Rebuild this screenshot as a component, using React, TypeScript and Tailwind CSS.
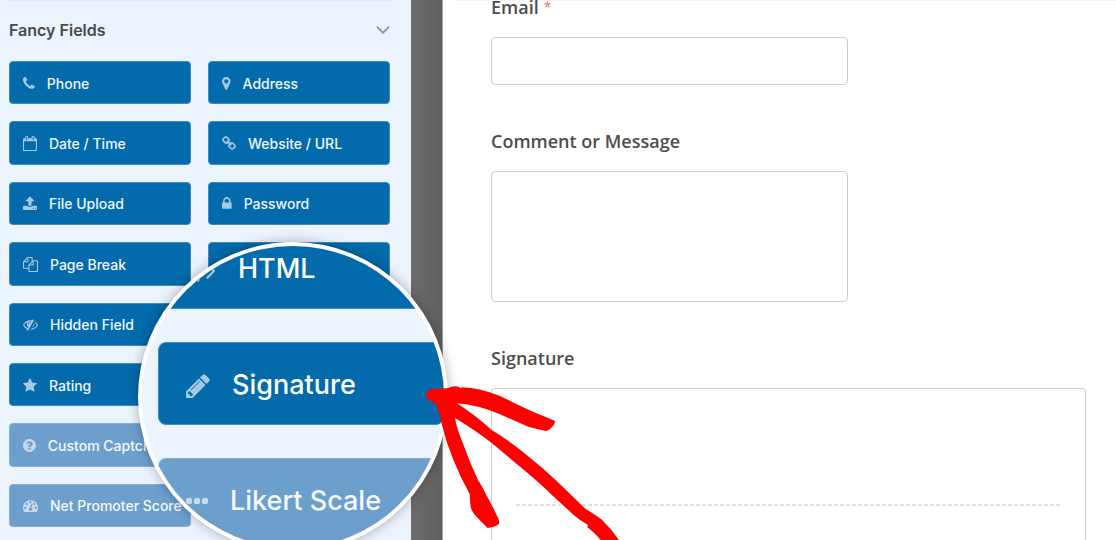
import { ChevronDown } from "lucide-react";

type Glyph = { width: number; path: string };

const glyphs = {
  phone: {
    width: 1408,
    path: "M1600 1240q0 27-10 70.5t-21 68.5q-21 50-122 106-94 51-186 51-27 0-53-3.5t-57-12.5-47-14.5-55.5-20.5-49.5-18q-98-35-175-83-127-79-264-216t-216-264q-48-77-83-175-3-9-18-49.5t-20.5-55.5-14.5-47-12.5-57-3.5-53q0-92 51-186 56-101 106-122 25-11 68.5-21t70.5-10q14 0 21 3 18 6 53 76 11 19 30 54t35 63.5 31 53.5q3 4 17.5 25t21.5 35.5 7 28.5q0 20-28.5 50t-62 55-62 53-28.5 46q0 9 5 22.5t8.5 20.5 14 24 11.5 19q76 137 174 235t235 174q2 1 19 11.5t24 14 20.5 8.5 22.5 5q18 0 46-28.5t53-62 55-62 50-28.5q14 0 28.5 7t35.5 21.5 25 17.5q25 15 53.5 31t63.5 35 54 30q70 35 76 53 3 7 3 21z",
  },
  marker: {
    width: 1024,
    path: "M1152 640q0-106-75-181t-181-75-181 75-75 181 75 181 181 75 181-75 75-181zm256 0q0 109-33 179l-364 774q-16 33-47.5 52t-67.5 19-67.5-19-46.5-52l-365-774q-33-70-33-179 0-212 150-362t362-150 362 150 150 362z",
  },
  calendar: {
    width: 1664,
    path: "M192 1664h1408v-1024h-1408v1024zm384-1216v-288q0-14-9-23t-23-9h-64q-14 0-23 9t-9 23v288q0 14 9 23t23 9h64q14 0 23-9t9-23zm768 0v-288q0-14-9-23t-23-9h-64q-14 0-23 9t-9 23v288q0 14 9 23t23 9h64q14 0 23-9t9-23zm384-64v1280q0 52-38 90t-90 38h-1408q-52 0-90-38t-38-90v-1280q0-52 38-90t90-38h128v-96q0-66 47-113t113-47h64q66 0 113 47t47 113v96h384v-96q0-66 47-113t113-47h64q66 0 113 47t47 113v96h128q52 0 90 38t38 90z",
  },
  link: {
    width: 1664,
    path: "M1520 1216q0-40-28-68l-208-208q-28-28-68-28-42 0-72 32 3 3 19 18.5t21.5 21.5 15 19 13 25.5 3.5 27.5q0 40-28 68t-68 28q-15 0-27.5-3.5t-25.5-13-19-15-21.5-21.5-18.5-19q-33 31-33 73 0 40 28 68l206 207q27 27 68 27 40 0 68-26l147-146q28-28 28-67zm-703-705q0-40-28-68l-206-207q-28-28-68-28-39 0-68 27l-147 146q-28 28-28 67 0 40 28 68l208 208q27 27 68 27 42 0 72-31-3-3-19-18.5t-21.5-21.5-15-19-13-25.5-3.5-27.5q0-40 28-68t68-28q15 0 27.5 3.5t25.5 13 19 15 21.5 21.5 18.5 19q33-31 33-73zm895 705q0 120-85 203l-147 146q-83 83-203 83-121 0-204-85l-206-207q-83-83-83-203 0-123 88-209l-88-88q-86 88-208 88-120 0-204-84l-208-208q-84-84-84-204t85-203l147-146q83-83 203-83 121 0 204 85l206 207q83 83 83 203 0 123-88 209l88 88q86-88 208-88 120 0 204 84l208 208q84 84 84 204z",
  },
  upload: {
    width: 1664,
    path: "M1344 1472q0-26-19-45t-45-19-45 19-19 45 19 45 45 19 45-19 19-45zm256 0q0-26-19-45t-45-19-45 19-19 45 19 45 45 19 45-19 19-45zm128-224v320q0 40-28 68t-68 28h-1472q-40 0-68-28t-28-68v-320q0-40 28-68t68-28h427q21 56 70.5 92t110.5 36h256q61 0 110.5-36t70.5-92h427q40 0 68 28t28 68zm-325-648q-17 40-59 40h-256v448q0 26-19 45t-45 19h-256q-26 0-45-19t-19-45v-448h-256q-42 0-59-40-17-39 14-69l448-448q18-19 45-19t45 19l448 448q31 30 14 69z",
  },
  lock: {
    width: 1152,
    path: "M640 768h512v-192q0-106-75-181t-181-75-181 75-75 181v192zm832 96v576q0 40-28 68t-68 28h-960q-40 0-68-28t-28-68v-576q0-40 28-68t68-28h32v-192q0-184 132-316t316-132 316 132 132 316v192h32q40 0 68 28t28 68z",
  },
  files: {
    width: 1792,
    path: "M1696 384q40 0 68 28t28 68v1216q0 40-28 68t-68 28h-960q-40 0-68-28t-28-68v-288h-544q-40 0-68-28t-28-68v-672q0-40 20-88t48-76l408-408q28-28 76-48t88-20h416q40 0 68 28t28 68v328q68-40 128-40h416zm-544 213l-299 299h299v-299zm-640-384l-299 299h299v-299zm196 647l316-316v-416h-384v416q0 40-28 68t-68 28h-416v640h512v-256q0-40 20-88t48-76zm956 804v-1152h-384v416q0 40-28 68t-68 28h-416v640h896z",
  },
  eyeSlash: {
    width: 1792,
    path: "M555 1335l78-141q-87-63-136-159t-49-203q0-121 61-225-229 117-381 353 167 258 427 375zm389-759q0-20-14-34t-34-14q-125 0-214.5 89.5t-89.5 214.5q0 20 14 34t34 14 34-14 14-34q0-86 61-147t147-61q20 0 34-14t14-34zm363-191q0 7-1 9-106 189-316 567t-315 566l-49 89q-10 16-28 16-12 0-134-70-16-10-16-28 0-12 44-87-143-65-263.5-173t-208.5-245q-20-31-20-69t20-69q153-235 380-371t496-136q89 0 180 17l54-97q10-16 28-16 5 0 18 6t31 15.5 33 18.5 31.5 18.5 19.5 11.5q16 10 16 27zm37 447q0 139-79 253.5t-209 164.5l280-502q8 45 8 84zm448 128q0 35-20 69-39 64-109 145-150 172-347.5 267t-419.5 95l74-132q212-18 392.5-137t301.5-307q-115-179-282-294l63-112q95 64 182.5 153t144.5 184q20 34 20 69z",
  },
  star: {
    width: 1664,
    path: "M1728 647q0 22-26 48l-363 354 86 500q1 7 1 20 0 21-10.5 35.5t-30.5 14.5q-19 0-40-12l-449-236-449 236q-22 12-40 12-21 0-31.5-14.5t-10.5-35.5q0-6 2-20l86-500-364-354q-25-27-25-48 0-37 56-46l502-73 225-455q19-41 49-41t49 41l225 455 502 73q56 9 56 46z",
  },
  question: {
    width: 1536,
    path: "M1024 1376v-192q0-14-9-23t-23-9h-192q-14 0-23 9t-9 23v192q0 14 9 23t23 9h192q14 0 23-9t9-23zm256-672q0-88-55.5-163t-138.5-116-170-41q-243 0-371 213-15 24 8 42l132 100q7 6 19 6 16 0 25-12 53-68 86-92 34-24 86-24 48 0 85.5 26t37.5 59q0 38-20 61t-68 45q-63 28-115.5 86.5t-52.5 125.5v36q0 14 9 23t23 9h192q14 0 23-9t9-23q0-19 21.5-49.5t54.5-49.5q32-18 49-28.5t46-35 44.5-48 28-60.5 12.5-81zm384 192q0 209-103 385.5t-279.5 279.5-385.5 103-385.5-103-279.5-279.5-103-385.5 103-385.5 279.5-279.5 385.5-103 385.5 103 279.5 279.5 103 385.5z",
  },
  gauge: {
    width: 1792,
    path: "M384 1152q0-53-37.5-90.5t-90.5-37.5-90.5 37.5-37.5 90.5 37.5 90.5 90.5 37.5 90.5-37.5 37.5-90.5zm192-448q0-53-37.5-90.5t-90.5-37.5-90.5 37.5-37.5 90.5 37.5 90.5 90.5 37.5 90.5-37.5 37.5-90.5zm428 481l101-382q6-26-7.5-48.5t-38.5-29.5-48 6.5-30 39.5l-101 382q-60 5-107 43.5t-63 98.5q-20 77 20 146t117 89 146-20 89-117q16-60-6-117t-72-91zm660-33q0-53-37.5-90.5t-90.5-37.5-90.5 37.5-37.5 90.5 37.5 90.5 90.5 37.5 90.5-37.5 37.5-90.5zm-640-640q0-53-37.5-90.5t-90.5-37.5-90.5 37.5-37.5 90.5 37.5 90.5 90.5 37.5 90.5-37.5 37.5-90.5zm448 192q0-53-37.5-90.5t-90.5-37.5-90.5 37.5-37.5 90.5 37.5 90.5 90.5 37.5 90.5-37.5 37.5-90.5zm320 448q0 261-141 483-19 29-54 29h-1402q-35 0-54-29-141-221-141-483 0-182 71-348t191-286 286-191 348-71 348 71 286 191 191 286 71 348z",
  },
  code: {
    width: 1920,
    path: "M553 1399l-50 50q-10 10-23 10t-23-10l-466-466q-10-10-10-23t10-23l466-466q10-10 23-10t23 10l50 50q10 10 10 23t-10 23l-393 393 393 393q10 10 10 23t-10 23zm591-1067l-373 1291q-4 13-15.5 19.5t-23.5 2.5l-62-17q-13-4-19.5-15.5t-2.5-24.5l373-1291q4-13 15.5-19.5t23.5-2.5l62 17q13 4 19.5 15.5t2.5 24.5zm657 651l-466 466q-10 10-23 10t-23-10l-50-50q-10-10-10-23t10-23l393-393-393-393q-10-10-10-23t10-23l50-50q10-10 23-10t23 10l466 466q10 10 10 23t-10 23z",
  },
  pencil: {
    width: 1536,
    path: "M491 1536l91-91-235-235-91 91v107h128v128h107zm523-928q0-22-22-22-10 0-17 7l-542 542q-7 7-7 17 0 22 22 22 10 0 17-7l542-542q7-7 7-17zm-54-192l416 416-832 832h-416v-416zm683 96q0 53-37 90l-166 166-416-416 166-165q36-38 90-38 53 0 91 38l235 234q37 39 37 91z",
  },
  dots: {
    width: 1408,
    path: "M576 736v192q0 40-28 68t-68 28h-192q-40 0-68-28t-28-68v-192q0-40 28-68t68-28h192q40 0 68 28t28 68zm512 0v192q0 40-28 68t-68 28h-192q-40 0-68-28t-28-68v-192q0-40 28-68t68-28h192q40 0 68 28t28 68zm512 0v192q0 40-28 68t-68 28h-192q-40 0-68-28t-28-68v-192q0-40 28-68t68-28h192q40 0 68 28t28 68z",
  },
} satisfies Record<string, Glyph>;

type Field = { label: string; icon: keyof typeof glyphs; locked?: boolean };

const leftFields: Field[] = [
  { label: "Phone", icon: "phone" },
  { label: "Date / Time", icon: "calendar" },
  { label: "File Upload", icon: "upload" },
  { label: "Page Break", icon: "files" },
  { label: "Hidden Field", icon: "eyeSlash" },
  { label: "Rating", icon: "star" },
  { label: "Custom Captcha", icon: "question", locked: true },
  { label: "Net Promoter Score", icon: "gauge", locked: true },
];

const rightFields: Field[] = [
  { label: "Address", icon: "marker" },
  { label: "Website / URL", icon: "link" },
  { label: "Password", icon: "lock" },
];

const lensFields: Field[] = [
  { label: "HTML", icon: "code" },
  { label: "Signature", icon: "pencil" },
  { label: "Likert Scale", icon: "dots", locked: true },
];

function Icon({ name, className }: { name: keyof typeof glyphs; className: string }) {
  const { width, path } = glyphs[name];
  return (
    <svg
      aria-hidden="true"
      className={`w-auto shrink-0 fill-current ${className}`}
      viewBox={`${(1792 - width) / 2} 0 ${width} 1792`}
    >
      <path d={path} />
    </svg>
  );
}

function FieldButton({ field }: { field: Field }) {
  const tone = field.locked
    ? "border-[#86b0d6] bg-[#6d9fcc] text-[#f3f8fd]"
    : "border-[#3d8cc0] bg-[#036aab] text-[#eef6fd]";
  return (
    <button
      type="button"
      className={`flex items-center gap-3 overflow-hidden rounded border pt-px pl-[13px] text-[14px] font-medium whitespace-nowrap ${tone}`}
    >
      <Icon name={field.icon} className={field.locked ? "h-[15px] text-[#c5d9ed]" : "h-[15px] text-[#a5c8e4]"} />
      {field.label}
    </button>
  );
}

function LensButton({ field }: { field: Field }) {
  const tone = field.locked
    ? "border-[#86b0d6] bg-[#6d9fcc] text-[#f3f8fd]"
    : "border-[#3d8cc0] bg-[#036aab] text-white";
  return (
    <button
      type="button"
      className={`flex h-[83px] shrink-0 items-center gap-[22px] rounded-lg border pt-1 pl-[27px] text-[27px] font-medium whitespace-nowrap ${tone}`}
    >
      <Icon name={field.icon} className={field.locked ? "h-7 text-[#c5d9ed]" : "h-7 text-[#a5c8e4]"} />
      {field.label}
    </button>
  );
}

export default function App() {
  return (
    <div className="relative flex h-screen overflow-hidden bg-white font-['Inter',sans-serif]">
      <aside className="flex w-[411px] shrink-0 flex-col bg-[#ebf3fd] pr-[21px] pb-[13px] pl-[9px]">
        <div className="flex h-[61px] shrink-0 items-center justify-between border-t border-[#e2eaf4] pb-0.5">
          <h2 className="text-base font-semibold text-[#4a4a4a]">Fancy Fields</h2>
          <button type="button" aria-label="Collapse Fancy Fields" className="-mr-1 text-[#8f98a3]">
            <ChevronDown className="size-[22px]" strokeWidth={2} />
          </button>
        </div>
        <div className="grid flex-1 grid-cols-2 gap-[17px]">
          <div className="grid grid-rows-8 gap-[17px]">
            {leftFields.map((field) => (
              <FieldButton key={field.label} field={field} />
            ))}
          </div>
          <div className="grid grid-rows-8 gap-[17px]">
            {rightFields.map((field) => (
              <FieldButton key={field.label} field={field} />
            ))}
            <div className="rounded border border-[#3d8cc0] bg-[#036aab]" />
          </div>
        </div>
      </aside>

      <div className="w-8 shrink-0 border-r border-[#a0a0a0] bg-linear-to-r from-[#6b6b6b] to-[#606060]" />

      <main className="flex flex-1 flex-col pl-[13px] font-['Open_Sans','Noto_Sans',sans-serif]">
        <form className="flex flex-1 flex-col gap-[49px] pr-[30px] pl-[35px] shadow-[inset_0_1px_0_#f4f4f4]">
          <div className="flex flex-col gap-[23px]">
            <label htmlFor="email" className="flex items-start gap-[5px] text-lg leading-[14px] font-semibold text-[#4d4d4d]">
              Email
              <span className="text-sm leading-[14px] font-normal text-[#e07070]">*</span>
            </label>
            <input id="email" type="email" className="h-12 w-3/5 rounded border border-[#cccccc] px-3" />
          </div>
          <div className="flex flex-col gap-[23px]">
            <label htmlFor="message" className="text-lg leading-[14px] font-semibold text-[#4d4d4d]">
              Comment or Message
            </label>
            <textarea id="message" className="h-[131px] w-3/5 resize-none rounded border border-[#cccccc] p-3" />
          </div>
          <div className="flex flex-col gap-[23px]">
            <span className="text-lg leading-[14px] font-semibold text-[#4d4d4d]">Signature</span>
            <div className="h-44 rounded border border-[#cccccc] px-6 pt-[115px]">
              <div className="h-0.5 bg-[repeating-linear-gradient(90deg,#e0e0e0_0px,#e0e0e0_4px,transparent_4px,transparent_6px)]" />
            </div>
          </div>
        </form>
      </main>

      <div className="absolute top-[242px] left-[138px] flex size-[310px] flex-col justify-center gap-[33px] overflow-hidden rounded-full border-4 border-white bg-[#ebf3fd] pb-[27px] pl-4 shadow-[0_0_12px_rgba(0,0,0,0.3)]">
        {lensFields.map((field) => (
          <LensButton key={field.label} field={field} />
        ))}
      </div>

      <svg aria-hidden="true" className="absolute top-[360px] left-[400px] h-[180px] w-60 fill-[#ff0000]" viewBox="0 0 720 540">
        <path d="M77 106Q80 90 95 88L145 84Q160 76 178 81L181 85L186 82Q240 84 300 108Q345 130 400 156Q432 168 465 183Q464 196 455 202Q448 212 438 213Q410 207 385 200L300 163Q235 135 171 130Q225 165 275 210Q330 243 380 285Q430 325 470 363L556 446Q580 460 604 478Q635 507 658 542H604Q580 515 562 502L564 495Q540 482 522 466L455 404Q420 370 372 330L275 249Q225 210 165 174Q170 205 187 245Q208 305 235 362Q245 375 260 407Q278 438 290 466Q298 478 298 489Q292 499 281 500L263 504Q240 482 224 464Q211 448 211 432L209 402Q180 350 159 297Q138 245 126 195Q120 160 108 132L90 122Q78 116 77 106Z" />
      </svg>
    </div>
  );
}
